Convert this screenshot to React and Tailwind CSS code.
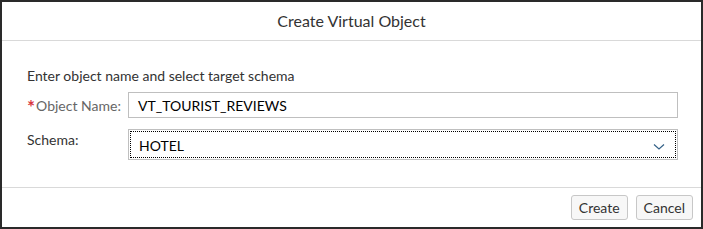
import React from "react";

const App = () => {
  return (
    <div
      className="w-[703px] h-[229px] bg-white border-2 border-[#2a2a2a] flex flex-col text-[#333]"
      style={{ fontFamily: "Lato, 'Noto Sans', sans-serif" }}
    >
      <div className="h-[39px] flex items-center justify-center border-b border-[#d9d9d9] text-[16px] text-[#333]">
        Create Virtual Object
      </div>
      <div className="flex-1 pl-[25px] pr-[23px] pt-[26px]">
        <div className="text-[14px] leading-[17px] text-[#333]">
          Enter object name and select target schema
        </div>
        <div className="flex items-center mt-[8px]">
          <div className="w-[101px] text-[14px] text-[#666] flex items-center">
            <span className="text-[#d9363e] text-[19px] font-bold leading-none mt-[3px] mr-[1px]">*</span>
            Object Name:
          </div>
          <div className="flex-1 h-[26px] border border-[#bfbfbf] flex items-center px-[9px] text-[14px] text-[#000]">
            VT_TOURIST_REVIEWS
          </div>
        </div>
        <div className="flex items-start mt-[11px]">
          <div className="w-[101px] text-[14px] text-[#333]">Schema:</div>
          <div className="flex-1 h-[31px] border border-[#bfbfbf] p-[1px]">
            <div className="h-full border border-dotted border-[#000] flex items-center justify-between pl-[8px] pr-[10px] text-[14px] text-[#000]">
              <span className="pt-[2px]">HOTEL</span>
              <svg width="12" height="8" viewBox="0 0 12 8" fill="none" className="mt-[4px]">
                <path d="M1 1.5 L6 6 L11 1.5" stroke="#346187" strokeWidth="1.2" />
              </svg>
            </div>
          </div>
        </div>
      </div>
      <div className="h-[40px] border-t border-[#d9d9d9] flex items-center justify-end gap-[8px] pr-[8px]">
        <button className="h-[25px] px-[7px] text-[14px] text-[#333] bg-[#f7f7f7] border border-[#c7c7c7] rounded-[3px]">
          Create
        </button>
        <button className="h-[25px] px-[7px] text-[14px] text-[#333] bg-[#f7f7f7] border border-[#c7c7c7] rounded-[3px]">
          Cancel
        </button>
      </div>
    </div>
  );
};

export default App;
